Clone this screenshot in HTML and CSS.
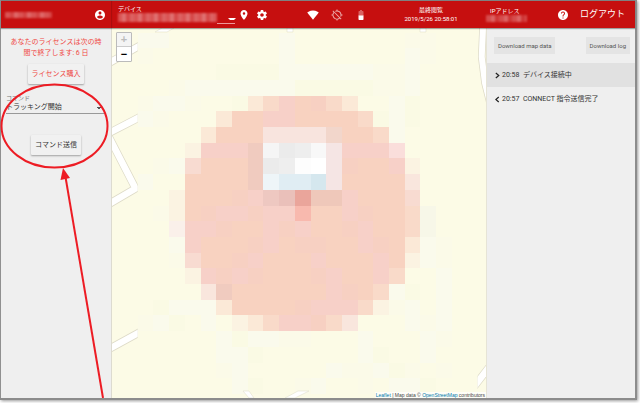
FILE: index.html
```html
<!DOCTYPE html>
<html lang="ja">
<head>
<meta charset="utf-8">
<title>トラッキング</title>
<link rel="stylesheet" href="styles.css">
</head>
<body>
<div class="app">
  <header class="topbar">
    <div class="user">
      <span class="masked masked-user"></span>
      <button class="icon-button" type="button" aria-label="アカウント">
        <svg class="icon" viewBox="0 0 24 24"><path d="M12 2C6.480 2 2 6.480 2 12s4.480 10 10 10 10-4.480 10-10S17.520 2 12 2zm0 3c1.660 0 3 1.340 3 3s-1.340 3-3 3-3-1.340-3-3 1.340-3 3-3zm0 14.200c-2.500 0-4.710-1.280-6-3.220.03-1.990 4-3.080 6-3.080 1.990 0 5.970 1.090 6 3.080-1.290 1.940-3.500 3.220-6 3.220z"/></svg>
      </button>
    </div>
    <div class="device">
      <div class="device-field">
        <span class="caption">デバイス</span>
        <div class="device-value">
          <span class="masked masked-device"></span>
          <button class="device-arrow" type="button" aria-label="デバイス選択"></button>
        </div>
      </div>
      <button class="icon-button" type="button" aria-label="位置">
        <svg class="icon" viewBox="0 0 24 24"><path d="M12 2C8.130 2 5 5.130 5 9c0 5.250 7 13 7 13s7-7.750 7-13c0-3.870-3.130-7-7-7zm0 9.500a2.500 2.500 0 0 1 0-5 2.500 2.500 0 0 1 0 5z"/></svg>
      </button>
      <button class="icon-button" type="button" aria-label="設定">
        <svg class="icon" viewBox="0 0 24 24"><path d="M19.430 12.980c.04-.32.07-.64.07-.98s-.03-.66-.07-.98l2.110-1.650c.19-.15.24-.42.12-.64l-2-3.460c-.12-.22-.39-.3-.61-.22l-2.490 1c-.52-.4-1.080-.73-1.690-.98l-.38-2.650C14.460 2.180 14.250 2 14 2h-4c-.25 0-.46.18-.49.42l-.38 2.650c-.61.25-1.170.59-1.690.98l-2.490-1c-.23-.09-.49 0-.61.22l-2 3.460c-.13.22-.07.49.12.64l2.110 1.650c-.04.32-.07.65-.07.98s.03.66.07.98l-2.110 1.650c-.19.15-.24.42-.12.64l2 3.460c.12.22.39.3.61.22l2.490-1c.52.4 1.080.73 1.690.98l.38 2.650c.03.24.24.42.49.42h4c.25 0 .46-.18.49-.42l.38-2.650c.61-.25 1.170-.59 1.690-.98l2.490 1c.23.09.49 0 .61-.22l2-3.460c.12-.22.07-.49-.12-.64l-2.110-1.650zM12 15.500c-1.930 0-3.500-1.570-3.500-3.500s1.570-3.500 3.500-3.500 3.500 1.570 3.500 3.500-1.570 3.500-3.500 3.500z"/></svg>
      </button>
    </div>
    <div class="status">
      <svg class="icon" viewBox="0 0 24 24"><path d="M12 21.500 23.600 7.100C23.200 6.700 18.700 3 12 3S.8 6.700.4 7.100z"/></svg>
      <svg class="icon icon-faded" viewBox="0 0 24 24"><path d="M20.940 11A8.994 8.994 0 0 0 13 3.060V1h-2v2.060c-1.130.12-2.190.46-3.160.97l1.500 1.500A6.995 6.995 0 0 1 19 12c0 .94-.19 1.840-.52 2.650l1.500 1.500c.5-.96.84-2.020.97-3.150H23v-2h-2.060zM3 4.270l2.040 2.040A8.914 8.914 0 0 0 3.060 11H1v2h2.060A8.994 8.994 0 0 0 11 20.940V23h2v-2.060c1.770-.2 3.380-.91 4.690-1.980L19.730 21 21 19.730 4.270 3 3 4.270zm13.270 13.270a6.995 6.995 0 0 1-9.810-9.810l9.810 9.810z"/></svg>
      <svg class="icon" viewBox="0 0 24 24"><path fill-opacity=".35" d="M17 5.330C17 4.600 16.400 4 15.670 4H14V2h-4v2H8.330C7.600 4 7 4.600 7 5.330V14h10z"/><path d="M7 13v7.670C7 21.400 7.600 22 8.330 22h7.330c.74 0 1.340-.6 1.340-1.330V13z"/></svg>
    </div>
    <div class="last-seen">
      <span>最終閲覧</span>
      <time>2019/5/26 20:58:01</time>
    </div>
    <div class="ip">
      <span>IPアドレス</span>
      <span class="masked masked-ip"></span>
    </div>
    <div class="session">
      <button class="icon-button" type="button" aria-label="ヘルプ">
        <svg class="icon" viewBox="0 0 24 24"><path d="M12 2C6.480 2 2 6.480 2 12s4.480 10 10 10 10-4.480 10-10S17.520 2 12 2zm1 17h-2v-2h2v2zm2.070-7.750-.9.920C13.450 12.900 13 13.500 13 15h-2v-.5c0-1.100.45-2.100 1.170-2.830l1.240-1.260c.37-.36.59-.86.59-1.410 0-1.100-.9-2-2-2s-2 .9-2 2H8c0-2.210 1.790-4 4-4s4 1.790 4 4c0 .88-.36 1.680-.93 2.250z"/></svg>
      </button>
      <a class="logout" href="#">ログアウト</a>
    </div>
  </header>

  <main class="content">
    <aside class="sidebar">
      <p class="license">あなたのライセンスは次の時間で終了します: 6 日</p>
      <button class="raised raised-red" type="button">ライセンス購入</button>
      <div class="command">
        <label class="command-label" for="command">コマンド</label>
        <select class="command-select" id="command"><option>トラッキング開始</option></select>
      </div>
      <button class="raised" type="button">コマンド送信</button>
    </aside>

    <section class="map">
      <svg class="map-canvas" viewBox="111 28 376 370" preserveAspectRatio="xMidYMid slice" aria-hidden="true">
        <defs>
          <clipPath id="west"><path d="M111 28H137.700V398H111z"/></clipPath>
          <clipPath id="corner"><path d="M477.500 360H488V392H477.500z"/></clipPath>
        </defs>
        <rect x="111" y="28" width="376" height="370" fill="#fcfbe6"/>
        <g id="mosaic" transform="translate(137.700 32.700) scale(15.710)" shape-rendering="crispEdges"></g>
        <g id="roads" fill="none" stroke="#dedbc8" stroke-width="8">
          <g clip-path="url(#west)">
            <path d="M109 63 140 45.500M109 133 140 117M109 137 135.500 188.500 109 204M109 349 140 332"/>
            <path stroke="#fff" stroke-width="6.500" d="M109 63 140 45.500M109 133 140 117M109 137 135.500 188.500 109 204M109 349 140 332"/>
          </g>
          <path stroke-width="7.500" d="M483 28 481.700 57 485 83 490 103"/>
          <path stroke="#fff" stroke-width="6" d="M483 28 481.700 57 485 83 490 103"/>
          <g clip-path="url(#corner)">
            <path d="M473 388 490 366"/>
            <path stroke="#fff" stroke-width="6.500" d="M473 388 490 366"/>
          </g>
        </g>
        <path fill="#fff" stroke="#e3e0cf" stroke-width=".6" d="M155 32 162 28H174L167 32zM287 28H293V32H287zM420 28H426V32H420zM243 391H249L254 398H249zM285 398 298 391H309L295 398z"/>
      </svg>
      <div class="zoom">
        <button class="zoom-button" type="button" disabled aria-label="拡大">+</button>
        <button class="zoom-button" type="button" aria-label="縮小">−</button>
      </div>
      <p class="attribution"><a href="#">Leaflet</a> | Map data © <a href="#">OpenStreetMap</a> contributors</p>
    </section>

    <aside class="log">
      <div class="downloads">
        <button class="flat" type="button">Download map data</button>
        <button class="flat" type="button">Download log</button>
      </div>
      <ul class="events">
        <li class="event event-active">
          <svg class="chevron" viewBox="0 0 6 8"><path d="M1 1 4.500 4 1 7"/></svg>
          <time>20:58</time><span>デバイス接続中</span>
        </li>
        <li class="event">
          <svg class="chevron" viewBox="0 0 6 8"><path d="M4.500 1 1 4 4.500 7"/></svg>
          <time>20:57</time><span>CONNECT 指令送信完了</span>
        </li>
      </ul>
    </aside>
  </main>

  <svg class="callout" viewBox="0 0 112 398" aria-hidden="true">
    <ellipse cx="54.500" cy="126" rx="53" ry="41.500" fill="none" stroke="#ed1c24" stroke-width="2"/>
    <path d="M65.500 177 103 398" fill="none" stroke="#ed1c24" stroke-width="2"/>
    <path d="M63 168 70 178 60.500 180z" fill="#ed1c24"/>
  </svg>
</div>
<script src="mosaic.js"></script>
</body>
</html>
```
FILE: styles.css
```css
* {
  box-sizing: border-box;
}

body {
  margin: 0;
  padding: 0 5px 5px 0;
  background: #fff;
  color: #333;
  font-family: Roboto, "Noto Sans CJK JP", sans-serif;
  font-size: 7px;
  line-height: 11px;
}

button,
select {
  margin: 0;
  padding: 0;
  border: 0;
  background: none;
  color: inherit;
  font: inherit;
}

.app {
  position: relative;
  display: flex;
  flex-direction: column;
  min-height: calc(100vh - 5px);
  border-top: 1px solid #808080;
  border-left: 1px solid #909090;
  box-shadow: 1px 1px 0 1px #8c8c8c, 2px 2px 3px 1px #999;
}

.topbar {
  position: relative;
  z-index: 1;
  display: grid;
  grid-template-columns: 110px 176fr 100fr 88fr 62fr 98fr;
  align-items: center;
  height: 27px;
  background: #c60f0f;
  box-shadow: 0 1px 1px #0005;
  color: #fff;
  font-size: 6px;
  line-height: 9px;
}

.user {
  display: flex;
  align-items: center;
  justify-content: space-between;
  height: 27px;
  padding: 0 5px 0 4px;
  box-shadow: 1px 0 1px #0002;
}

.icon-button {
  display: block;
  width: 12px;
  height: 12px;
}

.icon {
  display: block;
  width: 12px;
  height: 12px;
  fill: #fff;
}

.icon-faded {
  opacity: .65;
}

.masked {
  display: block;
  filter: blur(1px);
}

.masked-user {
  width: 47px;
  height: 6px;
  background: repeating-linear-gradient(90deg, #d95454 0 5px, #d54444 5px 9px, #de6868 9px 13px);
}

.masked-device {
  flex: 1;
  height: 9px;
  background: repeating-linear-gradient(90deg, #da5454 0 4px, #df7070 4px 8px, #d64848 8px 12px, #dc6262 12px 16px);
}

.masked-ip {
  width: 41px;
  height: 7px;
  margin-left: -4px;
  background: repeating-linear-gradient(90deg, #d64c4c 0 5px, #dc6565 5px 9px, #cf3535 9px 13px);
}

.device {
  display: flex;
  align-items: center;
  gap: 6px;
  padding-left: 7px;
}

.device-field {
  width: 117px;
  margin-right: -3px;
  padding-bottom: 2px;
}

.caption {
  display: block;
}

.device-value {
  display: flex;
  height: 11px;
}

.device-arrow {
  width: 18px;
  height: 11px;
  border-bottom: 1px solid #e99;
}

.device-arrow::after {
  content: "";
  display: block;
  width: 4px;
  margin: 2px 0 0 11px;
  border: 2px solid transparent;
  border-top-color: #fff;
  border-bottom: 0;
}

.status {
  display: flex;
  justify-content: center;
  gap: 12px;
}

.last-seen {
  display: grid;
  justify-items: center;
  padding-bottom: 2px;
}

.ip {
  padding: 0 0 2px 15px;
}

.session {
  display: flex;
  align-items: center;
  gap: 11px;
  padding-left: 20px;
}

.logout {
  color: #fff;
  font-size: 9px;
  text-decoration: none;
  white-space: nowrap;
}

.content {
  display: grid;
  grid-template-columns: 110px 1fr 148px;
  flex: 1;
  background: #efefef;
}

.sidebar {
  display: flex;
  flex-direction: column;
  align-items: center;
  padding: 9px 5px;
}

.license {
  margin: 0 0 5px;
  padding: 0 3px;
  color: #ef4a45;
  text-align: center;
}

.raised {
  height: 20px;
  padding: 0 4px;
  border-radius: 1px;
  background: #f1f1f1;
  box-shadow: 0 1px 2px #0005;
}

.raised-red {
  color: #ef4a45;
}

.command {
  display: flex;
  flex-direction: column;
  align-self: stretch;
  margin: 10px 2px 21px 0;
}

.command-label {
  color: #777;
  font-size: 6px;
  line-height: 8px;
}

.command-select {
  height: 12px;
  border-bottom: 1px solid #999;
  border-radius: 0;
  appearance: none;
  background: linear-gradient(45deg, transparent 50%, #555 50%) 91px 5px / 2px 2px no-repeat,
    linear-gradient(-45deg, transparent 50%, #555 50%) 93px 5px / 2px 2px no-repeat;
}

.map {
  position: relative;
  overflow: hidden;
  border-left: 1px solid #dddbd0;
  border-right: 1px solid #e6e4d6;
}

.map-canvas {
  position: absolute;
  width: 100%;
  height: 100%;
}

.zoom {
  position: absolute;
  top: 4px;
  left: 4px;
  width: 16px;
  border: 1px solid #bbb;
  border-radius: 1px;
}

.zoom-button {
  display: block;
  width: 14px;
  height: 14px;
  background: #fff;
  color: #000;
  font: bold 11px/13px "Liberation Sans", sans-serif;
}

.zoom-button:disabled {
  border-bottom: 1px solid #ccc;
  background: #f4f4f4;
  color: #bbb;
}

.attribution {
  position: absolute;
  right: 0;
  bottom: 0;
  margin: 0;
  padding: 0 1px;
  background: #fffb;
  color: #444;
  font: 5px/6px "Liberation Sans", sans-serif;
  white-space: nowrap;
}

.attribution a {
  color: #0078a8;
  text-decoration: none;
}

.downloads {
  display: flex;
  justify-content: space-between;
  padding: 9px 5px 9px 7px;
}

.flat {
  height: 17px;
  padding: 0 4px;
  background: #e4e4e4;
  color: #555;
  font-size: 6px;
}

.events {
  margin: 0;
  padding: 0;
  list-style: none;
}

.event {
  display: flex;
  align-items: center;
  height: 24px;
  padding: 0 8px;
}

.event-active {
  background: #e1e1e1;
}

.event time {
  width: 21px;
}

.chevron {
  width: 5px;
  height: 7px;
  margin-right: 2px;
  fill: none;
  stroke: #222;
  stroke-width: 1.500;
}

.callout {
  position: absolute;
  z-index: 2;
  top: -1px;
  left: -1px;
  width: 112px;
  height: 398px;
  pointer-events: none;
}
```
FILE: mosaic.js
```javascript
// Colour of each mosaic cell; a dot leaves the map background visible.
const palette = {
  a: '#f8d2c0', b: '#f7d0c8', c: '#f7d0c2', e: '#fbe9d7', f: '#f9dac9', g: '#fbf3e2',
  h: '#f8e4de', i: '#faf0ea', j: '#f2d6cb', k: '#f0cbbf', m: '#f5f5f5', n: '#ebebeb',
  o: '#eeeeee', p: '#f8f8f8', q: '#f5e5e4', r: '#fadedb', s: '#f8dbd1', t: '#f9e6dd',
  u: '#fafae4', v: '#fbfae8', w: '#fafaec', x: '#fdfdfd', y: '#ffffff',
  1: '#eef5f8', 2: '#e0edf3', 3: '#d5e7ee', 4: '#eec8c1', 5: '#eac0ba',
  6: '#eaa59b', 7: '#efc8ba', 8: '#f8b9ae', 9: '#f7f7e8'
};

const rows = [
  'ww.......w.......vv..',
  'v........w.......wv..',
  '.....uuuuwwwwwwvvw...',
  '..vwwwwwwwuuuuuvvw...',
  'vwwv..uefbacfe..wu...',
  'wv...eaabbaaaafuwu...',
  '....eaaahhhhjaafw....',
  '...gbbbkmnopqbbbr....',
  '.vwsaaaknoxyqcaabg...',
  'w..aaaak1223qaaaat...',
  '..gaaacb45677baaas...',
  '.vgacbbcbb8aabcaaf9..',
  '..ibbcaabcbaacbaaf9..',
  '..wbaaacbaccaabcaewv.',
  '..vsaacbaaabaaabagwv.',
  '...gbcbcaaacbaabf..w.',
  '....tkaaaaaabcafwu.w.',
  '.uwwweaaaacbbbfgvw.w.',
  'vwu.w.gefbbcft...wvw.',
  '.....wuwwvv...w...wv.',
  '.....wwu......wu..w..',
  '.....vw.....wvvwuv.v.',
  '......wu..vw..v.wwu..'
];

const mosaic = document.getElementById('mosaic');
rows.forEach((row, y) => {
  [...row].forEach((key, x) => {
    if (key === '.') return;
    const cell = document.createElementNS('http://www.w3.org/2000/svg', 'rect');
    cell.setAttribute('x', x);
    cell.setAttribute('y', y);
    cell.setAttribute('width', 1);
    cell.setAttribute('height', 1);
    cell.setAttribute('fill', palette[key]);
    mosaic.append(cell);
  });
});
```
